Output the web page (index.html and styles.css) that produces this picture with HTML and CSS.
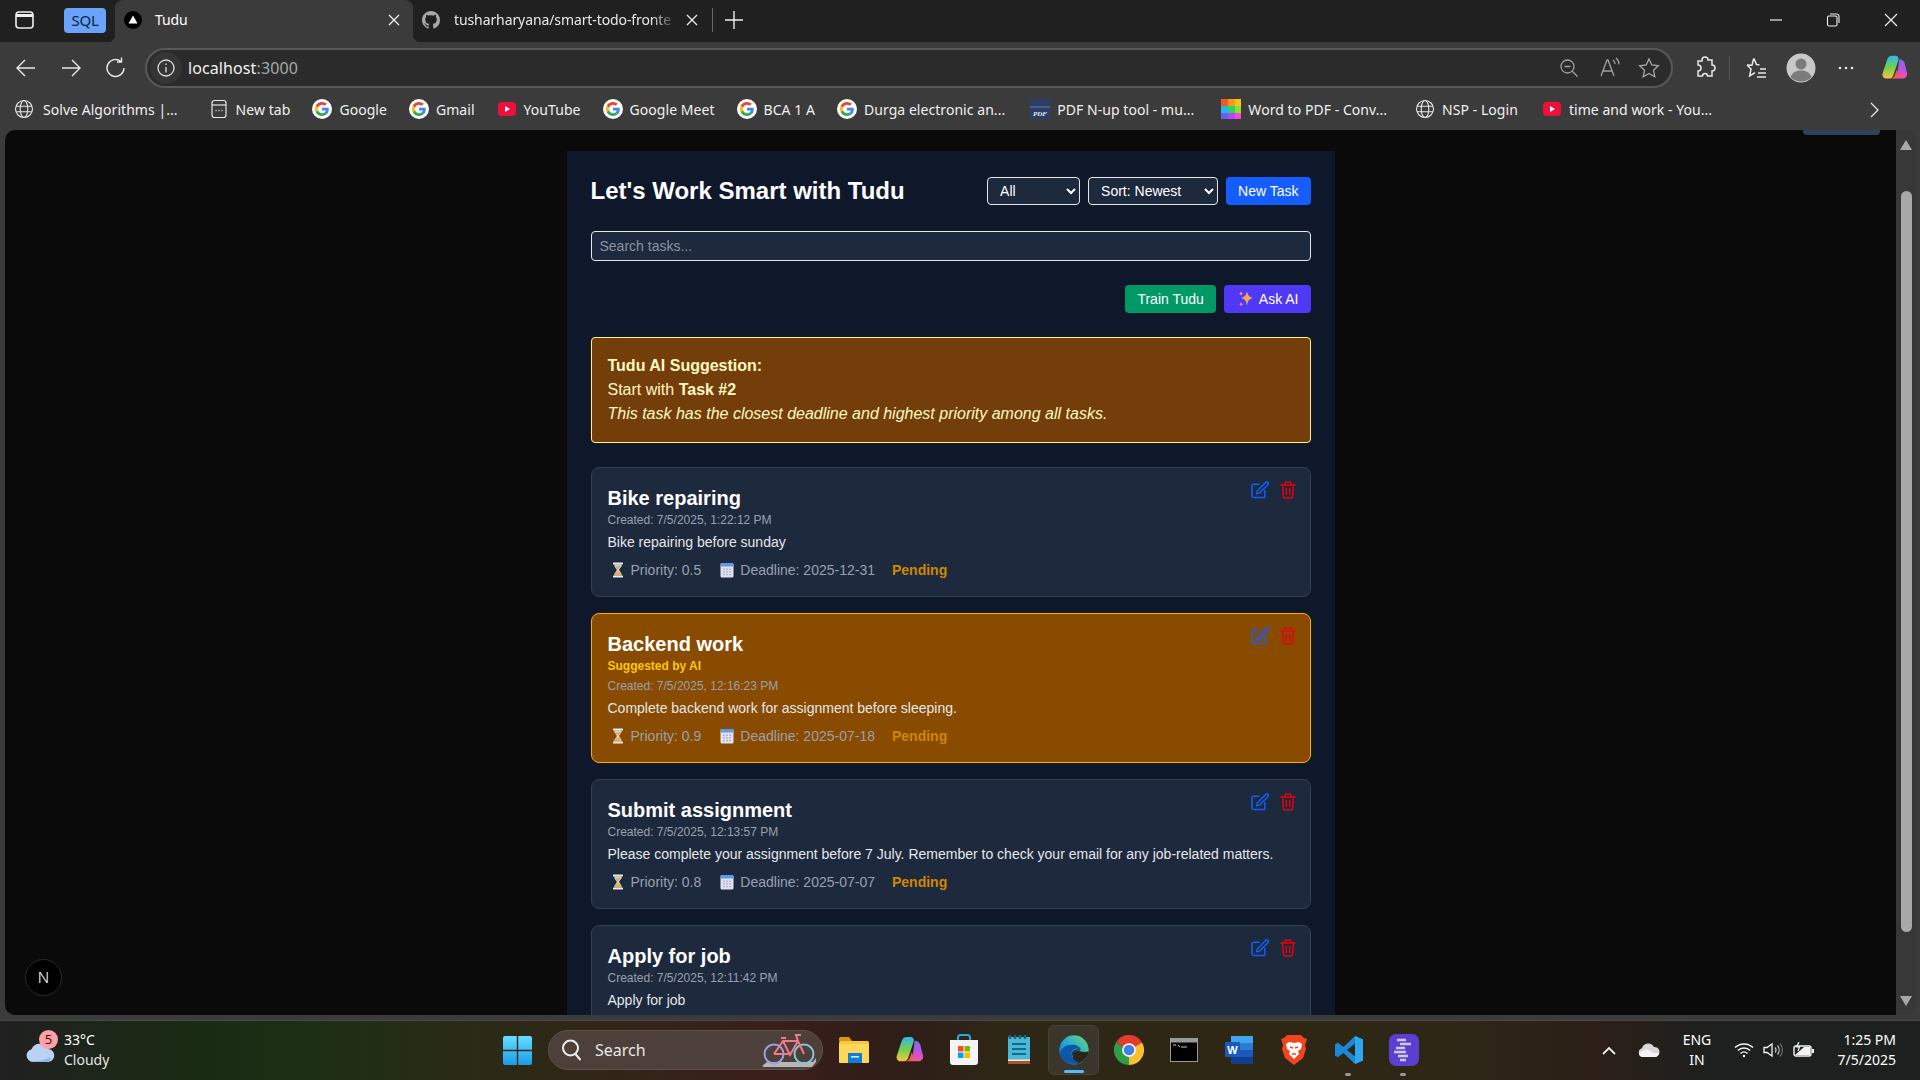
FILE: index.html
```html
<!DOCTYPE html>
<html lang="en">
<head>
<meta charset="utf-8">
<title>Tudu</title>
<link rel="stylesheet" href="styles.css">
</head>
<body>
<svg class="defs" width="0" height="0" aria-hidden="true">
  <defs>
    <symbol id="g" viewBox="-10 -10 68 68">
      <circle cx="24" cy="24" r="34" fill="#fff"/>
      <path fill="#EA4335" d="M24 9.5c3.54 0 6.71 1.22 9.21 3.6l6.85-6.85C35.9 2.38 30.47 0 24 0 14.62 0 6.51 5.38 2.56 13.22l7.98 6.19C12.43 13.72 17.74 9.5 24 9.5z"/>
      <path fill="#4285F4" d="M46.98 24.55c0-1.57-.15-3.09-.38-4.55H24v9.02h12.94c-.58 2.96-2.26 5.48-4.78 7.18l7.73 6c4.51-4.18 7.09-10.36 7.09-17.65z"/>
      <path fill="#FBBC05" d="M10.53 28.59c-.48-1.45-.76-2.99-.76-4.59s.27-3.14.76-4.59l-7.98-6.19C.92 16.46 0 20.12 0 24c0 3.88.92 7.54 2.56 10.78l7.97-6.19z"/>
      <path fill="#34A853" d="M24 48c6.48 0 11.93-2.13 15.89-5.81l-7.73-6c-2.15 1.45-4.92 2.3-8.16 2.3-6.26 0-11.57-4.22-13.47-9.91l-7.98 6.19C6.51 42.62 14.62 48 24 48z"/>
    </symbol>
    <symbol id="yt" viewBox="0 0 20 20">
      <rect x="1" y="3" width="18" height="14" rx="4" fill="#f00f3c"/>
      <path d="M8 7l5 3-5 3z" fill="#fff"/>
    </symbol>
    <symbol id="globe" viewBox="0 0 20 20" fill="none" stroke="#e8e8e8" stroke-width="1.1">
      <circle cx="10" cy="10" r="8.5"/>
      <ellipse cx="10" cy="10" rx="3.8" ry="8.5"/>
      <path d="M2 7.2h16M2 12.8h16"/>
    </symbol>
    <symbol id="hourglass" viewBox="0 0 14 16">
      <rect x="2" y="0.5" width="10" height="2" rx=".6" fill="#e6edf4"/>
      <rect x="2" y="13.5" width="10" height="2" rx=".6" fill="#e6edf4"/>
      <path d="M3.200 2.500h7.600c0 3-2.600 4-2.600 5.500s2.600 2.500 2.600 5.500H3.200c0-3 2.600-4 2.600-5.500S3.200 5.500 3.200 2.500z" fill="#bfe0f2"/>
      <path d="M3.900 4h6.200c-.6 2-2.700 2.500-3.100 4-.4-1.500-2.500-2-3.100-4zM3.500 13.400c.3-2.400 2.500-3.900 3.500-3.900s3.200 1.500 3.500 3.900z" fill="#f5a94f"/>
    </symbol>
    <symbol id="calendar" viewBox="0 0 14 16">
      <rect x="0.500" y="1" width="13" height="14.500" rx="1.500" fill="#e2e2f4"/>
      <path d="M.5 2.500A1.500 1.500 0 0 1 2 1h10a1.500 1.500 0 0 1 1.500 1.500V4.500H.5z" fill="#5e9be6"/>
      <path d="M3 6.500h1.800V8H3zM6.100 6.500h1.800V8H6.100zM9.200 6.500H11V8H9.200zM3 9.100h1.800v1.500H3zM6.100 9.100h1.800v1.500H6.100zM9.200 9.100H11v1.500H9.200zM3 11.700h1.800v1.500H3zM6.100 11.700h1.800v1.500H6.100zM9.200 11.700H11v1.500H9.200z" fill="#b0b2d0"/>
    </symbol>
    <symbol id="edit" viewBox="0 0 18 18" fill="none" stroke="currentColor" stroke-width="1.500" stroke-linecap="round" stroke-linejoin="round">
      <path d="M8 3.300H2.800A1.800 1.800 0 0 0 1 5.100v9.600a1.800 1.800 0 0 0 1.800 1.800h9.300a1.800 1.800 0 0 0 1.800-1.800V9.500"/>
      <path d="M14.600 1.400a1.600 1.600 0 0 1 2.300 2.300L8.500 12.100l-3 .8.800-3z"/>
    </symbol>
    <symbol id="trash" viewBox="0 0 16 18" fill="none" stroke="currentColor" stroke-width="1.500" stroke-linecap="round" stroke-linejoin="round">
      <path d="M1 4h14M5 4V2.300C5 1.600 5.600 1 6.300 1h3.400c.7 0 1.300.6 1.300 1.300V4"/>
      <path d="M2.600 4l.8 11.700c.1.800.7 1.300 1.400 1.300h6.400c.7 0 1.300-.5 1.400-1.300L13.400 4"/>
      <path d="M6.300 7.500v6M9.700 7.500v6"/>
    </symbol>
    <linearGradient id="edgeg" x1="0" y1="1" x2="1" y2="0">
      <stop offset="0" stop-color="#0f62b8"/><stop offset=".45" stop-color="#1fa3e0"/><stop offset="1" stop-color="#6fdc6a"/>
    </linearGradient>
    <linearGradient id="wing" x1="0" y1="0" x2="0" y2="1">
      <stop offset="0" stop-color="#66dcff"/><stop offset="1" stop-color="#1b9ce8"/>
    </linearGradient>
    <linearGradient id="copl" x1="0" y1="0" x2="0" y2="1">
      <stop offset="0" stop-color="#2fb6f5"/><stop offset=".5" stop-color="#6fd24a"/><stop offset="1" stop-color="#f6c445"/>
    </linearGradient>
    <linearGradient id="copr" x1="0" y1="0" x2="0" y2="1">
      <stop offset="0" stop-color="#7a6cf0"/><stop offset=".6" stop-color="#c94fd8"/><stop offset="1" stop-color="#f2588f"/>
    </linearGradient>
    <symbol id="copilot" viewBox="0 0 32 32">
      <path d="M22 6c3 0 5 1.500 6 4l3 12c.6 3-1.500 6-5 6h-9c-1 0-1-1 0-1.500 2-1 3-2.500 3-5z" fill="url(#copr)"/>
      <path d="M14 2c-3 0-5 1.500-6 5L3 22c-1 3 1 6 4 6h4c2 0 3.500-1.300 4.300-4L21 7c.8-3-1-5-3.500-5z" fill="url(#copl)"/>
      <path d="M11 28c3 0 5-1 6-4l2-6c0 0 2 4 1 7-.6 2-2.500 3-5 3z" fill="#f2603c"/>
    </symbol>
  </defs>
</svg>

<header class="tabstrip">
  <svg class="i-side" width="19" height="18" viewBox="0 0 19 18" fill="none" stroke="#eee" stroke-width="1.600"><rect x="1" y="1" width="17" height="16" rx="3"/><path d="M1 4.500h17" stroke-width="3"/></svg>
  <div class="sql">SQL</div>
  <div class="tab tab-active">
    <svg width="18" height="18" viewBox="0 0 18 18"><circle cx="9" cy="9" r="9" fill="#000"/><path d="M9 4.500l4.500 8h-9z" fill="#fff"/></svg>
    <span class="tab-title">Tudu</span>
    <svg class="tab-x" width="12" height="12" viewBox="0 0 12 12" stroke="#eee" stroke-width="1.300"><path d="M1 1l10 10M11 1L1 11"/></svg>
  </div>
  <div class="tab tab-other">
    <svg width="18" height="18" viewBox="0 0 16 16" fill="#a8a8a8"><path d="M8 0C3.580 0 0 3.580 0 8c0 3.540 2.290 6.530 5.470 7.590.4.070.55-.17.55-.38 0-.19-.01-.82-.01-1.490-2.010.37-2.530-.49-2.690-.94-.09-.23-.48-.94-.82-1.130-.28-.15-.68-.52-.01-.53.63-.01 1.080.58 1.230.82.720 1.210 1.870.87 2.330.66.070-.52.28-.87.51-1.070-1.780-.2-3.640-.89-3.640-3.950 0-.87.31-1.590.82-2.150-.08-.2-.36-1.020.08-2.120 0 0 .67-.21 2.200.82.640-.18 1.320-.27 2-.27s1.360.09 2 .27c1.530-1.040 2.200-.82 2.200-.82.440 1.100.16 1.920.08 2.120.51.56.82 1.270.82 2.150 0 3.070-1.870 3.750-3.650 3.950.29.25.54.73.54 1.480 0 1.070-.01 1.930-.01 2.200 0 .21.15.46.55.38A8.010 8.010 0 0 0 16 8c0-4.420-3.580-8-8-8z"/></svg>
    <span class="tab-title tab-fade">tusharharyana/smart-todo-fronte</span>
    <svg class="tab-x" width="12" height="12" viewBox="0 0 12 12" stroke="#eee" stroke-width="1.300"><path d="M1 1l10 10M11 1L1 11"/></svg>
  </div>
  <div class="tab-sep"></div>
  <svg class="i-plus" width="18" height="18" viewBox="0 0 18 18" stroke="#eee" stroke-width="1.400"><path d="M9 0v18M0 9h18"/></svg>
  <div class="winctl">
    <svg width="12" height="12" viewBox="0 0 12 12" stroke="#eee" stroke-width="1.200"><path d="M0 6h12"/></svg>
    <svg width="14" height="14" viewBox="0 0 14 14" fill="none" stroke="#eee" stroke-width="1.100"><rect x="1.500" y="3" width="9.500" height="10" rx="1.500"/><path d="M4 1h6.500A2.500 2.500 0 0 1 13 3.500V10"/></svg>
    <svg width="14" height="14" viewBox="0 0 14 14" stroke="#eee" stroke-width="1.200"><path d="M1 1l12 12M13 1L1 13"/></svg>
  </div>
</header>

<nav class="toolbar">
  <div class="slot"><svg width="24" height="24" viewBox="0 0 24 24" fill="none" stroke="#e8e8e8" stroke-width="1.400"><path d="M21 12H3M11 4l-8 8 8 8"/></svg></div>
  <div class="slot"><svg width="24" height="24" viewBox="0 0 24 24" fill="none" stroke="#e8e8e8" stroke-width="1.400"><path d="M3 12h18M13 4l8 8-8 8"/></svg></div>
  <div class="slot"><svg width="24" height="24" viewBox="0 0 24 24" fill="none" stroke="#e8e8e8" stroke-width="1.400"><path d="M20 12a8.500 8.500 0 1 1-3-6.500M17.500 1.500v4.500H13"/></svg></div>
  <div class="url">
    <div class="url-info"><svg width="20" height="20" viewBox="0 0 20 20" fill="none" stroke="#ddd" stroke-width="1.300"><circle cx="10" cy="10" r="8"/><path d="M10 9v5.500M10 5.500v1.500"/></svg></div>
    <span class="url-host">localhost</span><span class="url-port">:3000</span>
    <div class="url-right">
      <div class="url-slot"><svg width="20" height="20" viewBox="0 0 20 20" fill="none" stroke="#a0a0a0" stroke-width="1.300"><circle cx="8.500" cy="8.500" r="6.500"/><path d="M5.500 8.500h6M13 13l5.500 5.500"/></svg></div>
      <div class="url-slot"><svg width="22" height="22" viewBox="0 0 22 22" fill="none" stroke="#a0a0a0" stroke-width="1.300"><path d="M3 19L9 3h1l6 16M5 14h9M15 3c1.500 1 2 2.500 2 4M18 1c2 1.500 3 4 3 6.500"/></svg></div>
      <div class="url-slot"><svg width="22" height="22" viewBox="0 0 22 22" fill="none" stroke="#a8a8a8" stroke-width="1.300"><path d="M11 2l2.800 6 6.500.8-4.800 4.400 1.300 6.500L11 16.500l-5.800 3.200 1.300-6.500L1.700 8.800 8.200 8z"/></svg></div>
    </div>
  </div>
  <div class="slot slot-ext"><svg width="22" height="24" viewBox="0 0 22 24" fill="none" stroke="#e8e8e8" stroke-width="1.500"><path d="M8 4a3 3 0 0 1 6 0h4v5a3 3 0 0 1 0 6v5h-4.500a2.500 2.500 0 0 0-5 0H4v-5a3 3 0 0 0 0-6V5h4z"/></svg></div>
  <div class="tool-sep"></div>
  <div class="slot slot-fav"><svg width="24" height="24" viewBox="0 0 24 24" fill="none" stroke="#e8e8e8" stroke-width="1.500"><path d="M10 2.500l2.500 6 3 .3M3 9l5 .2 1.700-6.700M3 9l4 4-1.300 7 5.300-3.300M16 13h6M14 17h8M13 21h9"/></svg></div>
  <div class="slot"><svg width="30" height="30" viewBox="0 0 30 30"><circle cx="15" cy="15" r="14.500" fill="#c8c8c8"/><circle cx="15" cy="11" r="5.500" fill="#7b7b7b"/><path d="M4.500 24c2-5 6-6.500 10.500-6.500S23.500 19 25.500 24a14.500 14.500 0 0 1-21 0z" fill="#7b7b7b"/></svg></div>
  <div class="slot"><svg width="16" height="4" viewBox="0 0 16 4" fill="#e8e8e8"><circle cx="2" cy="2" r="1.300"/><circle cx="8" cy="2" r="1.300"/><circle cx="14" cy="2" r="1.300"/></svg></div>
  <div class="slot slot-cop"><svg width="28" height="28"><use href="#copilot"/></svg></div>
</nav>

<div class="bookmarks">
  <div class="bm bm-first"><svg width="20" height="20"><use href="#globe"/></svg><span>Solve Algorithms |...</span></div>
  <div class="bm bm-wide"><svg width="20" height="20" viewBox="0 0 20 20" fill="none" stroke="#e8e8e8" stroke-width="1.200"><rect x="3" y="1.500" width="14" height="17" rx="2.500"/><path d="M3 6h14"/><path d="M6.500 11.500h1M9.500 11.500h1M12.500 11.500h1" stroke-width="1.500"/></svg><span>New tab</span></div>
  <div class="bm"><svg width="20" height="20"><use href="#g"/></svg><span>Google</span></div>
  <div class="bm"><svg width="20" height="20"><use href="#g"/></svg><span>Gmail</span></div>
  <div class="bm"><svg width="20" height="20"><use href="#yt"/></svg><span>YouTube</span></div>
  <div class="bm"><svg width="20" height="20"><use href="#g"/></svg><span>Google Meet</span></div>
  <div class="bm"><svg width="20" height="20"><use href="#g"/></svg><span>BCA 1 A</span></div>
  <div class="bm"><svg width="20" height="20"><use href="#g"/></svg><span>Durga electronic an...</span></div>
  <div class="bm bm-gap"><svg width="20" height="20" viewBox="0 0 20 20"><rect width="20" height="20" y="0" fill="#2c3e66"/><rect y="7" width="20" height="2" fill="#4d5f88"/><text x="10" y="17" class="pdf-text">PDF</text></svg><span>PDF N-up tool - mu...</span></div>
  <div class="bm bm-gap2"><svg width="20" height="20" viewBox="0 0 20 20"><rect width="7" height="7" fill="#f25a1f"/><rect x="7" width="7" height="7" fill="#f79a1c"/><rect x="14" width="6" height="7" fill="#f7c51c"/><rect y="7" width="7" height="7" fill="#22b8e8"/><rect x="7" y="7" width="7" height="7" fill="#2bd46a"/><rect x="14" y="7" width="6" height="7" fill="#8ee02c"/><rect y="14" width="7" height="6" fill="#6d5cf0"/><rect x="7" y="14" width="7" height="6" fill="#b04cf0"/><rect x="14" y="14" width="6" height="6" fill="#f04cd8"/></svg><span>Word to PDF - Conv...</span></div>
  <div class="bm bm-gap3"><svg width="20" height="20"><use href="#globe"/></svg><span>NSP - Login</span></div>
  <div class="bm bm-gap4"><svg width="20" height="20"><use href="#yt"/></svg><span>time and work - You...</span></div>
  <svg class="bm-more" width="10" height="16" viewBox="0 0 10 16" fill="none" stroke="#e8e8e8" stroke-width="1.300"><path d="M1 1l7 7-7 7"/></svg>
</div>

<div class="content">
  <main class="viewport">
    <div class="peek"></div>
    <section class="page">
      <div class="head">
        <h1 class="title">Let's Work Smart with Tudu</h1>
        <div class="head-ctl">
          <select class="sel sel-all"><option>All</option></select>
          <select class="sel sel-sort"><option>Sort: Newest</option></select>
          <button class="btn btn-blue">New Task</button>
        </div>
      </div>
      <input class="search" type="text" placeholder="Search tasks...">
      <div class="ai-row">
        <button class="btn btn-green">Train Tudu</button>
        <button class="btn btn-indigo"><svg class="spark" width="16" height="18" viewBox="0 0 16 18" fill="#f7a35c"><path d="M9 1c.7 4 2 5.800 6 7-4 1.200-5.300 3-6 8-.7-5-2-6.800-6-8 4-1.200 5.300-3 6-7z"/><path d="M3 1c.3 1.500.8 2 2 2.500C3.800 4 3.300 4.500 3 6c-.3-1.500-.8-2-2-2.500C2.200 3 2.700 2.500 3 1zM3 12c.3 1.300.7 1.800 2 2.200-1.300.4-1.700.9-2 2.300-.3-1.400-.7-1.900-2-2.300 1.300-.4 1.700-.9 2-2.200z"/></svg>Ask AI</button>
      </div>
      <div class="suggest">
        <p class="suggest-h">Tudu AI Suggestion:</p>
        <p class="suggest-l">Start with <strong>Task #2</strong></p>
        <p class="suggest-i">This task has the closest deadline and highest priority among all tasks.</p>
      </div>

      <article class="card">
        <h2 class="card-t">Bike repairing</h2>
        <p class="card-c">Created: 7/5/2025, 1:22:12 PM</p>
        <p class="card-d">Bike repairing before sunday</p>
        <div class="meta">
          <span class="meta-i"><svg class="emo" width="14" height="16"><use href="#hourglass"/></svg>Priority: 0.5</span>
          <span class="meta-i"><svg class="emo" width="14" height="16"><use href="#calendar"/></svg>Deadline: 2025-12-31</span>
          <span class="pending">Pending</span>
        </div>
        <div class="acts"><svg class="a-edit" width="18" height="18"><use href="#edit"/></svg><svg class="a-del" width="16" height="18"><use href="#trash"/></svg></div>
      </article>

      <article class="card card-ai">
        <h2 class="card-t">Backend work</h2>
        <p class="card-s">Suggested by AI</p>
        <p class="card-c card-c-s">Created: 7/5/2025, 12:16:23 PM</p>
        <p class="card-d">Complete backend work for assignment before sleeping.</p>
        <div class="meta">
          <span class="meta-i"><svg class="emo" width="14" height="16"><use href="#hourglass"/></svg>Priority: 0.9</span>
          <span class="meta-i"><svg class="emo" width="14" height="16"><use href="#calendar"/></svg>Deadline: 2025-07-18</span>
          <span class="pending">Pending</span>
        </div>
        <div class="acts"><svg class="a-edit" width="18" height="18"><use href="#edit"/></svg><svg class="a-del" width="16" height="18"><use href="#trash"/></svg></div>
      </article>

      <article class="card">
        <h2 class="card-t">Submit assignment</h2>
        <p class="card-c">Created: 7/5/2025, 12:13:57 PM</p>
        <p class="card-d">Please complete your assignment before 7 July. Remember to check your email for any job-related matters.</p>
        <div class="meta">
          <span class="meta-i"><svg class="emo" width="14" height="16"><use href="#hourglass"/></svg>Priority: 0.8</span>
          <span class="meta-i"><svg class="emo" width="14" height="16"><use href="#calendar"/></svg>Deadline: 2025-07-07</span>
          <span class="pending">Pending</span>
        </div>
        <div class="acts"><svg class="a-edit" width="18" height="18"><use href="#edit"/></svg><svg class="a-del" width="16" height="18"><use href="#trash"/></svg></div>
      </article>

      <article class="card">
        <h2 class="card-t">Apply for job</h2>
        <p class="card-c">Created: 7/5/2025, 12:11:42 PM</p>
        <p class="card-d">Apply for job</p>
        <div class="acts"><svg class="a-edit" width="18" height="18"><use href="#edit"/></svg><svg class="a-del" width="16" height="18"><use href="#trash"/></svg></div>
      </article>
    </section>
    <div class="next-badge">N</div>
  </main>
  <aside class="scrollbar">
    <div class="sb-up"></div>
    <div class="sb-thumb"></div>
    <div class="sb-down"></div>
  </aside>
</div>

<footer class="taskbar">
  <div class="weather">
    <div class="w-icon">
      <svg width="30" height="22" viewBox="0 0 30 22"><path d="M8 21a6.500 6.500 0 0 1-1.500-12.800A9 9 0 0 1 23 8a6.500 6.500 0 0 1-.5 13z" fill="#bcd2f5"/><path d="M8 21a6.500 6.500 0 0 1-3-1c6 1 14 0 21-4-.5 3-2.500 5-5 5z" fill="#8fb0ea"/></svg>
      <span class="w-badge">5</span>
    </div>
    <div class="w-text"><span>33°C</span><span class="w-sub">Cloudy</span></div>
  </div>
  <svg class="win" width="29" height="29" viewBox="0 0 29 29"><path d="M0 2a2 2 0 0 1 2-2h11.800v13.800H0zM15.200 0H27a2 2 0 0 1 2 2v11.800H15.200zM0 15.200h13.800V29H2a2 2 0 0 1-2-2zM15.200 15.200H29V27a2 2 0 0 1-2 2H15.200z" fill="url(#wing)"/></svg>
  <div class="tsearch">
    <svg width="24" height="24" viewBox="0 0 24 24" fill="none" stroke="#eee" stroke-width="2"><circle cx="10.500" cy="10" r="7.500"/><path d="M15.500 16l5 6"/></svg>
    <span>Search</span>
    <svg class="bike" width="56" height="36" viewBox="0 0 56 36" fill="none"><path d="M1 34l5-4h46l3-4v4l-4 5H3z" fill="#b9b5b0"/><circle cx="13" cy="22" r="9.500" stroke="#9aa0e8" stroke-width="2"/><circle cx="43" cy="22" r="9.500" stroke="#7cc8d8" stroke-width="2"/><path d="M13 22L22 9h15l6 13M22 9l7 14 8-14M13 22h16M20 6h5M37 9l-2-6h5" stroke="#f27a86" stroke-width="2"/></svg>
  </div>
  <div class="tb-icons">
    <div class="tb"><svg width="32" height="28" viewBox="0 0 32 28"><path d="M1 2.500A1.500 1.500 0 0 1 2.500 1H11l3 4h-13z" fill="#d89a0c"/><rect x="1" y="5" width="30" height="22" rx="1.500" fill="#f8c93e"/><rect x="1" y="8" width="30" height="19" rx="1.500" fill="#fbd75a"/><rect x="10" y="17" width="14" height="10" fill="#0f7fd4"/><rect x="13" y="20" width="8" height="1.600" fill="#cfeaff"/></svg></div>
    <div class="tb"><svg width="30" height="30"><use href="#copilot"/></svg></div>
    <div class="tb"><svg width="30" height="32" viewBox="0 0 30 32"><path d="M9 6V3.500C9 2 10 1 11.500 1h7C20 1 21 2 21 3.500V6" fill="none" stroke="#27a7e8" stroke-width="2"/><path d="M1 6h28v22a3 3 0 0 1-3 3H4a3 3 0 0 1-3-3z" fill="#f4f4f4"/><rect x="9" y="12" width="5.500" height="5.500" fill="#f25022"/><rect x="15.500" y="12" width="5.500" height="5.500" fill="#7fba00"/><rect x="9" y="18.500" width="5.500" height="5.500" fill="#00a4ef"/><rect x="15.500" y="18.500" width="5.500" height="5.500" fill="#ffb900"/></svg></div>
    <div class="tb"><svg width="24" height="30" viewBox="0 0 24 30"><rect x="1" y="2" width="22" height="27" fill="#4cb8d8"/><rect x="1" y="26" width="22" height="3" fill="#a8562a"/><rect x="1" y="24.500" width="22" height="1.500" fill="#f0e8dc"/><path d="M3 0v4M8 0v4M13 0v4M18 0v4" stroke="#12678a" stroke-width="2.400"/><path d="M5 9h14M5 14h14M5 19h14" stroke="#0f6a90" stroke-width="2"/></svg></div>
    <div class="tb tb-on"><svg width="32" height="32" viewBox="0 0 48 48"><circle cx="24" cy="24" r="22" fill="url(#edgeg)"/><path d="M46 26c0 8-7 16-17 19-2-1-8-5-7-13 0-5 5-8 11-6 5 1 9 2 13 0z" fill="#2a2618"/><path d="M3 30c1-9 9-14 18-14 7 0 12 3 14 8-5-3-15-3-15 6 0 7 6 11 12 13-12 5-26-1-29-13z" fill="#0e56a8"/><path d="M21 32c0-6 5-9 12-8" stroke="#1a2a50" stroke-width="2" fill="none"/></svg><span class="tb-pill"></span></div>
    <div class="tb"><svg width="30" height="30" viewBox="0 0 48 48"><path d="M24 24L3.200 12A24 24 0 0 1 44.800 12z" fill="#e33b2e"/><path d="M24 24L44.800 12A24 24 0 0 1 24 48z" fill="#fbc02d"/><path d="M24 24V48A24 24 0 0 1 3.200 12z" fill="#2e9e48"/><circle cx="24" cy="24" r="11" fill="#fff"/><circle cx="24" cy="24" r="8.500" fill="#3f80ea"/></svg></div>
    <div class="tb"><svg width="28" height="24" viewBox="0 0 28 24"><rect x=".5" y=".5" width="27" height="23" fill="#000" stroke="#9a9a9a"/><rect x="1" y="1" width="26" height="3.500" fill="#9a9a9a"/><path d="M3 7h3M8 7l2 2M11 9h6" stroke="#ccc" stroke-width="1"/></svg></div>
    <div class="tb"><svg width="30" height="30" viewBox="0 0 30 30"><rect x="7" y="1" width="22" height="28" rx="1.500" fill="#2b7cd3"/><rect x="7" y="1" width="22" height="7" fill="#41a5ee"/><rect x="7" y="15" width="22" height="7" fill="#185abd"/><rect x="7" y="22" width="22" height="7" fill="#103f91"/><rect x="1" y="7" width="15" height="15" rx="1" fill="#185abd"/><text x="8.500" y="18.500" class="word-text">W</text></svg></div>
    <div class="tb"><svg width="26" height="31" viewBox="0 0 26 31"><path d="M6 1h14l3 3 3 1-2 6 1 4-3 9-9 7-9-7-3-9 1-4-2-6 3-1z" fill="#f0451f"/><path d="M8 8l5 1 5-1 3 2-1 5-3 2 1 3-5 5-5-5 1-3-3-2-1-5z" fill="#fff"/><path d="M9 13l3 1M17 13l-3 1M11 20h4" stroke="#f0451f" stroke-width="1.500"/></svg></div>
    <div class="tb"><svg width="30" height="30" viewBox="0 0 30 30"><path d="M21 1L9.500 12 4 7.800 1 9.300v11.400l3 1.500L9.500 18 21 29l8-3.500v-21zM21 8.500v13L13 15z" fill="#1c87d6"/><path d="M21 1l8 3.500v21L21 29z" fill="#2ba8f2"/></svg><span class="tb-dot"></span></div>
    <div class="tb"><svg width="30" height="32" viewBox="0 0 30 32"><rect width="30" height="32" rx="7" fill="#5a3fd0"/><path d="M8 6h9M11 10h11M7 14h9M5 18h12M9 22h10M11 26h6" stroke="#cfc8f5" stroke-width="2.400"/></svg><span class="tb-dot"></span></div>
  </div>
  <div class="tray">
    <svg class="t-chev" width="18" height="12" viewBox="0 0 18 12" fill="none" stroke="#eee" stroke-width="1.800"><path d="M3 10l6-6 6 6"/></svg>
    <svg class="t-od" width="22" height="16" viewBox="0 0 22 16"><path d="M5 15a4.500 4.500 0 0 1-1-8.800A6.500 6.500 0 0 1 16 5a5 5 0 0 1 1 10z" fill="#d8d8d8"/><path d="M5 15c-2 0-4-1-4-4l8-4 6 4 6 0c0 2-2 4-4 4z" fill="#f4f4f4"/></svg>
    <div class="t-lang"><span>ENG</span><span>IN</span></div>
    <svg class="t-wifi" width="20" height="16" viewBox="0 0 20 16" fill="none" stroke="#f4f4f4" stroke-width="1.500"><path d="M1 5.500a13 13 0 0 1 18 0M3.800 8.500a9 9 0 0 1 12.400 0M6.500 11.500a5 5 0 0 1 7 0"/><circle cx="10" cy="14" r="1.200" fill="#f4f4f4" stroke="none"/></svg>
    <svg class="t-vol" width="20" height="18" viewBox="0 0 20 18" fill="none" stroke="#f4f4f4" stroke-width="1.300"><path d="M1 6.500h3L9 3v12l-5-3.500H1z"/><path d="M12 6.500a4 4 0 0 1 0 5M14.500 4.500a7 7 0 0 1 0 9" stroke="#bbb"/><path d="M17 2.500a10 10 0 0 1 0 13" stroke="#666"/></svg>
    <svg class="t-bat" width="22" height="16" viewBox="0 0 22 16" fill="none" stroke="#f4f4f4" stroke-width="1.400"><rect x="1" y="4" width="17" height="10" rx="2"/><path d="M20 7v4" stroke-width="2"/><path d="M6 0L3.500 5h3L5 9" stroke-width="1.200"/><path d="M2 13l9-8h6v8z" fill="#f4f4f4" stroke="none"/></svg>
    <div class="t-clock"><span>1:25 PM</span><span>7/5/2025</span></div>
  </div>
</footer>
</body>
</html>
```

FILE: styles.css
```css
* { box-sizing: border-box; }
html, body { margin: 0; padding: 0; }
body {
  width: 1920px;
  height: 1080px;
  overflow: hidden;
  display: flex;
  flex-direction: column;
  background: #3b3b3b;
  color: #fff;
  font-family: "Noto Sans", "Liberation Sans", sans-serif;
}
p, h1, h2 { margin: 0; }
.defs { position: absolute; }

/* tab strip */
.tabstrip {
  height: 42px;
  flex: none;
  display: flex;
  align-items: center;
  background: #202020;
  padding-left: 15px;
}
.i-side { flex: none; margin-bottom: 2px; }
.sql {
  flex: none;
  width: 42px;
  height: 25px;
  margin-left: 30px;
  margin-bottom: 1px;
  border-radius: 4px;
  background: #6ba3fb;
  color: #0c2340;
  font-size: 15px;
  line-height: 25px;
  text-align: center;
  letter-spacing: -0.3px;
}
.tab {
  flex: none;
  height: 42px;
  display: flex;
  align-items: center;
  font-size: 14px;
}
.tab-active {
  position: relative;
  width: 298px;
  margin-left: 9px;
  padding: 0 13px 3px 9px;
  background: #3b3b3b;
  border-radius: 8px 8px 0 0;
}
.tab-active::before,
.tab-active::after {
  content: "";
  position: absolute;
  bottom: 0;
  width: 8px;
  height: 8px;
}
.tab-active::before { left: -8px; background: radial-gradient(circle at 0 0, #202020 8px, #3b3b3b 8.5px); }
.tab-active::after { right: -8px; background: radial-gradient(circle at 100% 0, #202020 8px, #3b3b3b 8.5px); }
.tab-other {
  width: 297px;
  padding: 0 12px 3px 9px;
}
.tab-title { margin-left: 13px; white-space: nowrap; letter-spacing: -0.1px; }
.tab-fade {
  width: 224px;
  overflow: hidden;
  margin-left: 14px;
  color: #e8e8e8;
  -webkit-mask-image: linear-gradient(90deg, #000 88%, transparent);
  mask-image: linear-gradient(90deg, #000 88%, transparent);
}
.tab-x { margin-left: auto; flex: none; }
.tab-sep { width: 1px; height: 24px; background: #6a6a6a; margin-left: 2px; margin-bottom: 3px; flex: none; }
.i-plus { margin-left: 12px; margin-bottom: 3px; flex: none; }
.winctl {
  margin-left: auto;
  margin-bottom: 3px;
  display: flex;
  align-items: center;
  gap: 44px;
  padding-right: 22px;
}

/* toolbar */
.toolbar {
  height: 46px;
  flex: none;
  display: flex;
  align-items: center;
  padding: 6px 0 0 3px;
  background: #3b3b3b;
}
.slot {
  flex: none;
  width: 45px;
  height: 40px;
  display: flex;
  align-items: center;
  justify-content: center;
}
.url {
  flex: none;
  width: 1528px;
  height: 40px;
  margin-left: 7px;
  display: flex;
  align-items: center;
  background: #2b2b2b;
  border: 2px solid #585858;
  border-radius: 20px;
  padding-right: 2px;
  font-size: 16px;
  letter-spacing: 0.1px;
}
.url-info {
  flex: none;
  width: 32px;
  height: 32px;
  margin-left: 3px;
  margin-right: 6px;
  border-radius: 50%;
  background: #353535;
  display: flex;
  align-items: center;
  justify-content: center;
}
.url-host { color: #f2f2f2; }
.url-port { color: #a8a8a8; }
.url-right { margin-left: auto; display: flex; }
.url-slot {
  width: 40px;
  height: 36px;
  display: flex;
  align-items: center;
  justify-content: center;
}
.slot-ext { margin-left: 10px; width: 44px; }
.tool-sep { width: 1px; height: 24px; background: #555; margin-left: 2px; flex: none; }
.slot-fav { margin-left: 4px; width: 44px; }
.slot-cop { margin-left: 3px; }

/* bookmarks */
.bookmarks {
  height: 42px;
  flex: none;
  display: flex;
  align-items: center;
  padding-left: 14px;
  gap: 22px;
  background: #3b3b3b;
  font-size: 14px;
  color: #f0f0f0;
  letter-spacing: 0.05px;
}
.bm { flex: none; display: flex; align-items: center; white-space: nowrap; }
.bm span { margin-left: 7px; }
.bm-first span { margin-left: 9px; }
.bm-wide { margin-left: 9px; }
.bm-gap { margin-left: 3px; }
.bm-gap2 { margin-left: 5px; }
.bm-gap3 { margin-left: 6px; }
.bm-gap4 { margin-left: 2px; }
.bm-more { position: absolute; left: 1870px; top: 102px; }
.pdf-text { font: italic bold 7px "Liberation Serif", serif; fill: #e8ecf8; text-anchor: middle; }

/* content */
.content {
  height: 885px;
  flex: none;
  display: flex;
  margin-left: 5px;
  margin-right: 4px;
  background: #383838;
  border-radius: 10px;
  overflow: hidden;
}
.viewport {
  position: relative;
  flex: none;
  width: 1891px;
  height: 885px;
  background: #0a0a0a;
  overflow: hidden;
  padding-top: 21px;
  display: flex;
  justify-content: center;
  font-family: "Liberation Sans", Arial, sans-serif;
}
.peek {
  position: absolute;
  left: 1798px;
  top: 0;
  width: 77px;
  height: 5px;
  background: #314158;
  border-radius: 0 0 4px 4px;
}
.page {
  flex: none;
  width: 768px;
  height: 1200px;
  background: #0f172b;
  padding: 26px 24px 0;
}
.head { display: flex; align-items: center; justify-content: space-between; height: 28px; }
.title { font-size: 24px; line-height: 32px; font-weight: 700; }
.head-ctl { display: flex; gap: 8px; }
.sel {
  height: 28px;
  padding: 0 4px 0 8px;
  background: #1d293d;
  color: #fff;
  border: 1px solid #e5e7eb;
  border-radius: 4px;
  font: 14px "Liberation Sans", Arial, sans-serif;
}
.sel-all { width: 93px; }
.sel-sort { width: 130px; }
.btn {
  height: 28px;
  padding: 0 12px;
  border: 0;
  border-radius: 4px;
  color: #fff;
  font: 14px "Liberation Sans", Arial, sans-serif;
  display: inline-flex;
  align-items: center;
}
.btn-blue { background: #155dfc; }
.btn-green { background: #009966; }
.btn-indigo { background: #4f39f6; }
.spark { margin: 0 5px 0 2px; }
.search {
  display: block;
  width: 100%;
  height: 30px;
  margin-top: 26px;
  padding: 0 8px;
  background: #1d293d;
  color: #fff;
  border: 1px solid #e5e7eb;
  border-radius: 4px;
  font: 14px "Liberation Sans", Arial, sans-serif;
}
.search::placeholder { color: #8b93a1; }
.ai-row { display: flex; justify-content: flex-end; gap: 8px; margin-top: 24px; }
.suggest {
  margin-top: 24px;
  padding: 16px;
  background: #733e0a;
  border: 1px solid #fff085;
  border-radius: 4px;
  color: #fef9c2;
  font-size: 16px;
  line-height: 24px;
}
.suggest-h { font-weight: 700; }
.suggest-i { font-style: italic; }
.card {
  position: relative;
  margin-top: 16px;
  padding: 16px;
  background: #1d293d;
  border: 1px solid #314158;
  border-radius: 8px;
}
.suggest + .card { margin-top: 24px; }
.card-ai { background: #894b00; border-color: #f0b100; }
.card-t { font-size: 20px; line-height: 28px; font-weight: 700; }
.card-c { font-size: 12px; line-height: 16px; color: #99a1af; }
.card-c-s { margin-top: 4px; }
.card-s { font-size: 12px; line-height: 16px; font-weight: 700; color: #fdc700; }
.card-d { font-size: 14px; line-height: 20px; margin-top: 4px; color: #e5e7eb; }
.meta {
  display: flex;
  gap: 16px;
  margin-top: 8px;
  font-size: 14px;
  line-height: 20px;
  color: #99a1af;
}
.meta-i { display: inline-flex; align-items: center; }
.emo { margin: 0 6px 0 3px; flex: none; }
.pending { color: #d08700; font-weight: 700; margin-left: 1px; }
.acts { position: absolute; top: 13px; right: 14px; display: flex; gap: 11px; }
.a-edit { color: #155dfc; }
.a-del { color: #e7000b; }
.next-badge {
  position: absolute;
  left: 20px;
  top: 829px;
  width: 37px;
  height: 37px;
  border-radius: 50%;
  background: #000;
  border: 1px solid #2a2a2a;
  color: #eee;
  font-family: Inter, "Liberation Sans", sans-serif;
  font-weight: 300;
  font-size: 15px;
  line-height: 35px;
  text-align: center;
}

/* scrollbar */
.scrollbar {
  flex: none;
  width: 20px;
  height: 885px;
  position: relative;
  display: flex;
  flex-direction: column;
  align-items: center;
  padding-top: 10px;
}
.sb-up { width: 0; height: 0; border: 6px solid transparent; border-top: 0; border-bottom: 10px solid #a8a8a8; }
.sb-thumb { width: 11px; height: 741px; margin-top: 41px; background: #a8a8a8; border-radius: 6px; }
.sb-down { width: 0; height: 0; margin-top: 64px; border: 6px solid transparent; border-bottom: 0; border-top: 10px solid #a8a8a8; }

/* taskbar */
.taskbar {
  margin-top: 5px;
  height: 60px;
  flex: none;
  display: flex;
  align-items: center;
  padding: 0 0 2px 25px;
  border-top: 1px solid #4a4a4a;
  background: linear-gradient(90deg, #202020 0, #1a2a14 170px, #1c2f14 300px, #2b2a16 480px, #3a1f1a 780px, #2e1d18 900px, #2e2716 1000px, #2e2716 1450px, #2b1f18 1600px, #1c201e 1720px, #1c201e 100%);
}
.weather { flex: none; width: 478px; display: flex; align-items: center; position: relative; }
.w-icon { flex: none; width: 39px; padding-top: 10px; }
.w-badge {
  position: absolute;
  left: 14px;
  top: 0;
  width: 19px;
  height: 19px;
  border-radius: 50%;
  background: #ff9fa6;
  color: #3a1015;
  font-size: 13px;
  line-height: 19px;
  text-align: center;
}
.w-text { display: flex; flex-direction: column; font-size: 14px; line-height: 20px; }
.w-sub { color: #e4e4e4; }
.win { flex: none; margin-top: 1px; }
.tsearch {
  flex: none;
  width: 275px;
  height: 40px;
  margin-left: 16px;
  display: flex;
  align-items: center;
  padding-left: 11px;
  border-radius: 20px;
  background: #4d403b;
  border: 1px solid #5f524d;
  font-size: 16px;
  color: #e8e8e8;
  overflow: hidden;
}
.tsearch span { margin-left: 11px; }
.bike { margin-left: auto; margin-right: 5px; }
.tb-icons { flex: none; display: flex; margin-left: 3px; }
.tb {
  position: relative;
  flex: none;
  width: 55px;
  height: 50px;
  display: flex;
  align-items: center;
  justify-content: center;
  border-radius: 6px;
}
.tb-on { background: #3a362c; border: 1px solid #46423a; width: 51px; margin: 0 2px; }
.tb-pill { position: absolute; left: 15px; bottom: 1px; width: 20px; height: 3px; border-radius: 2px; background: #4dc2ff; }
.tb-dot { position: absolute; left: 24px; bottom: -1px; width: 6px; height: 3px; border-radius: 2px; background: #999; }
.word-text { font: bold 11px "Liberation Sans", Arial, sans-serif; fill: #fff; text-anchor: middle; }
.tray {
  margin-left: auto;
  flex: none;
  width: 320px;
  padding-right: 24px;
  display: flex;
  align-items: center;
  font-size: 14px;
  line-height: 20px;
}
.t-chev { flex: none; }
.t-od { flex: none; margin-left: 20px; }
.t-lang { flex: none; width: 34px; margin-left: 20px; display: flex; flex-direction: column; align-items: center; }
.t-wifi { flex: none; margin-left: 20px; }
.t-vol { flex: none; margin-left: 9px; }
.t-bat { flex: none; margin-left: 10px; }
.t-clock { margin-left: auto; display: flex; flex-direction: column; align-items: flex-end; }
```
